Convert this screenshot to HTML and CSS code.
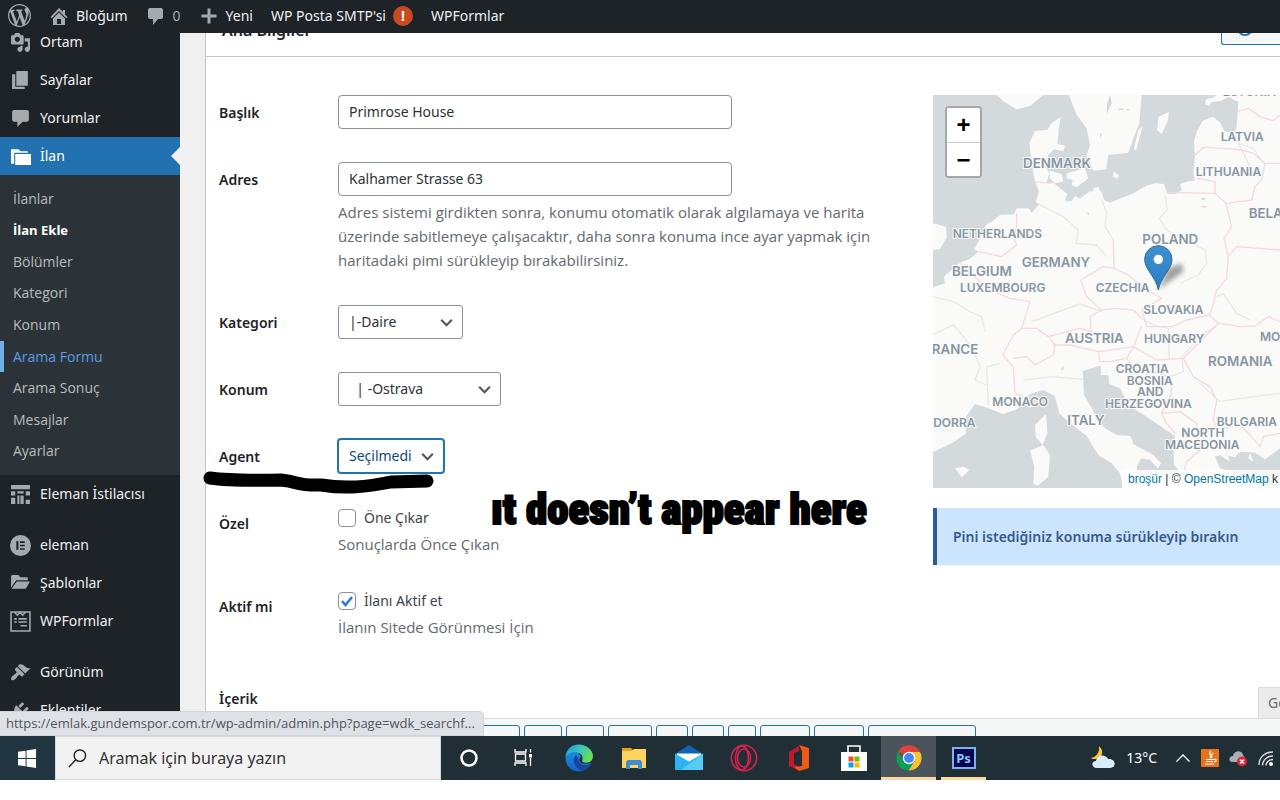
FILE: index.html
```html
<!DOCTYPE html>
<html lang="tr">
<head>
<meta charset="utf-8">
<title>İlan Ekle</title>
<link rel="stylesheet" href="styles.css">
</head>
<body>
<div class="screen">
  <header class="adminbar">
    <a class="bar-item bar-logo" href="#" aria-label="WordPress"><svg class="icon-lg" viewBox="0 0 20 20"><path d="M20 10c0-5.51-4.49-10-10-10C4.48 0 0 4.49 0 10c0 5.52 4.48 10 10 10 5.51 0 10-4.48 10-10zM7.78 15.37L4.37 6.22c.55-.02 1.17-.08 1.17-.08.5-.06.44-1.13-.06-1.11 0 0-1.45.11-2.37.11-.18 0-.37 0-.58-.01C4.12 2.69 6.87 1.11 10 1.11c2.33 0 4.45.87 6.05 2.34-.68-.11-1.65.39-1.65 1.58 0 .74.45 1.36.9 2.1.35.61.55 1.36.55 2.46 0 1.49-1.4 5-1.4 5l-3.03-8.37c.54-.02.82-.17.82-.17.5-.05.44-1.25-.06-1.22 0 0-1.44.12-2.38.12-.87 0-2.33-.12-2.33-.12-.5-.03-.56 1.2-.06 1.22l.92.08 1.26 3.41zM17.41 10c.24-.64.74-1.87.43-4.25.7 1.29 1.05 2.71 1.05 4.25 0 3.29-1.73 6.24-4.4 7.78.97-2.59 1.94-5.2 2.92-7.78zM6.1 18.09C3.12 16.65 1.11 13.53 1.11 10c0-1.3.23-2.48.72-3.59C3.25 10.3 4.67 14.2 6.1 18.09zm4.03-6.63l2.58 6.98c-.86.29-1.76.45-2.71.45-.79 0-1.57-.11-2.29-.33.81-2.38 1.62-4.74 2.42-7.1z"/></svg></a>
    <a class="bar-item" href="#"><svg viewBox="0 0 20 20"><path d="M16 8.500l2.500 2.500-1.300 1.300L10 5.100l-7.200 7.200L1.500 11 10 2l4 4V4h2v4.500zm-6-2l6 6V19H4v-6.500zM12 18v-5H8v5h4z"/></svg>Bloğum</a>
    <a class="bar-item bar-muted" href="#"><svg viewBox="0 0 20 20"><path d="M4 2h11c1.1 0 2 .9 2 2v7c0 1.1-.9 2-2 2h-3l-5 6v-6H4c-1.1 0-2-.9-2-2V4c0-1.1.9-2 2-2z"/></svg>0</a>
    <a class="bar-item" href="#"><svg viewBox="0 0 20 20"><path d="M17.500 8.500v3h-6v6h-3v-6h-6v-3h6v-6h3v6z"/></svg>Yeni</a>
    <a class="bar-item" href="#">WP Posta SMTP'si<span class="alert-dot">!</span></a>
    <a class="bar-item" href="#">WPFormlar</a>
  </header>

  <div class="page">
    <nav class="sidebar">
      <a class="menu-item" href="#"><svg viewBox="0 0 20 20"><path d="M13 11V4c0-.55-.45-1-1-1h-1.670L9 1H5L3.670 3H2c-.55 0-1 .45-1 1v7c0 .55.45 1 1 1h10c.55 0 1-.45 1-1zM7 4.500c1.380 0 2.500 1.120 2.500 2.500S8.380 9.500 7 9.500 4.500 8.380 4.500 7 5.620 4.500 7 4.500zM14 6h5v10.500c0 1.380-1.120 2.500-2.500 2.500S14 17.880 14 16.500s1.120-2.500 2.500-2.500c.17 0 .34.02.5.05V9h-3V6zm-4 8.050V13h2v3.500c0 1.380-1.120 2.500-2.500 2.500S7 17.880 7 16.500 8.120 14 9.500 14c.17 0 .34.02.5.05z"/></svg>Ortam</a>
      <a class="menu-item" href="#"><svg viewBox="0 0 20 20"><path d="M6 15V1h11v14H6zm-1 1h9v2H2V4h3v12z"/></svg>Sayfalar</a>
      <a class="menu-item" href="#"><svg viewBox="0 0 20 20"><path d="M4 2h12c1.100 0 2 .9 2 2v7c0 1.100-.9 2-2 2h-4l-5 5v-5H4c-1.100 0-2-.9-2-2V4c0-1.100.9-2 2-2z"/></svg>Yorumlar</a>
      <a class="menu-item menu-current" href="#"><svg viewBox="0 0 20 20"><path d="M1 3h7l2 2h7v1.500H4V17H1zM5 7.500h15V18H5z"/></svg>İlan</a>
      <div class="submenu">
        <a href="#">İlanlar</a>
        <a class="sub-current" href="#">İlan Ekle</a>
        <a href="#">Bölümler</a>
        <a href="#">Kategori</a>
        <a href="#">Konum</a>
        <a class="sub-hover" href="#">Arama Formu</a>
        <a href="#">Arama Sonuç</a>
        <a href="#">Mesajlar</a>
        <a href="#">Ayarlar</a>
      </div>
      <div class="menu-group">
        <a class="menu-item" href="#"><svg viewBox="0 0 20 20"><path d="M1 1h18v4H1zM1 7h4v4H1zM7 7h6v2H7zM15 7h4v4h-4zM1 13h4v6H1zM7 11h2v8H7zM10 11h3v8h-3zM15 15h4v4h-4z"/></svg>Eleman İstilacısı</a>
      </div>
      <div class="menu-group">
        <a class="menu-item" href="#"><svg viewBox="0 0 20 20"><path fill-rule="evenodd" d="M10 0a10 10 0 1 0 0 20 10 10 0 0 0 0-20zM6 6h2v8H6zM9.500 6H14v1.500H9.500zM9.500 9.300H14v1.500H9.500zM9.500 12.500H14V14H9.500z"/></svg>eleman</a>
        <a class="menu-item" href="#"><svg viewBox="0 0 20 20"><path d="M1 14V3l1-1h6l2 2h6l1 1v2H6z"/><path d="M6.500 8H19l-4 7H1.500z"/></svg>Şablonlar</a>
        <a class="menu-item" href="#"><svg viewBox="0 0 20 20"><path fill="none" stroke="#a7aaad" stroke-width="1.500" d="M1 1h18v18H1zM4 1l3 3 2.500-3L12 4l3-3M4 7.500h2.500M8 7.500h8M4 10.500h2.500M8 10.500h8M10 14h6"/></svg>WPFormlar</a>
      </div>
      <div class="menu-group">
        <a class="menu-item" href="#"><svg viewBox="0 0 20 20"><path d="M14.480 11.060L7.410 3.990l1.500-1.500c.5-.56 2.300-.47 3.510.32 1.210.8 1.430 1.280 2.910 2.100 1.180.64 2.450 1.260 4.450.85zm-.71.71L6.700 4.700 4.930 6.470c-.39.39-.39 1.020 0 1.410l1.060 1.060c.39.39.39 1.030 0 1.420-.6.6-1.430 1.110-2.210 1.690-.35.26-.7.53-1.010.84C1.430 14.230.4 16.080 1.400 17.070c.99 1 2.840-.03 4.180-1.360.31-.31.58-.66.85-1.020.57-.78 1.080-1.610 1.690-2.210.39-.39 1.020-.39 1.410 0l1.060 1.060c.39.39 1.020.39 1.410 0z"/></svg>Görünüm</a>
        <a class="menu-item" href="#"><svg viewBox="0 0 20 20"><path d="M13.110 4.360L9.870 7.600 8 5.730l3.240-3.240c.35-.34 1.050-.2 1.560.32.52.51.66 1.210.31 1.550zm-8 1.770l.91-1.120 9.010 9.010-1.190.84c-.71.71-2.630 1.160-3.820 1.160H6.140L4.900 17.260c-.59.59-1.540.59-2.120 0-.59-.58-.59-1.530 0-2.120l1.240-1.240v-3.880c0-1.130.4-3.190 1.090-3.890zm7.260 3.970l3.240-3.240c.34-.35 1.040-.21 1.550.31.52.51.66 1.210.31 1.550l-3.240 3.250z"/></svg>Eklentiler</a>
      </div>
    </nav>

    <main class="panel">
      <div class="panel-head">
        <h2>Ana Bilgiler</h2>
        <button class="list-btn" type="button"><svg viewBox="0 0 16 16"><circle cx="8" cy="8" r="7"/></svg>Liste</button>
      </div>
      <div class="panel-body">
        <form class="fields">
          <div class="row"><label class="name" for="title">Başlık</label><div><input class="text" id="title" type="text" value="Primrose House"></div></div>
          <div class="row"><label class="name" for="address">Adres</label><div><input class="text" id="address" type="text" value="Kalhamer Strasse 63">
            <p class="hint hint-long">Adres sistemi girdikten sonra, konumu otomatik olarak algılamaya ve harita üzerinde sabitlemeye çalışacaktır, daha sonra konuma ince ayar yapmak için haritadaki pimi sürükleyip bırakabilirsiniz.</p></div></div>
          <div class="row"><label class="name" for="category">Kategori</label><div><select class="pick pick-category" id="category"><option>|-Daire</option></select></div></div>
          <div class="row"><label class="name" for="place">Konum</label><div><select class="pick pick-place" id="place"><option>&nbsp;&nbsp;| -Ostrava</option></select></div></div>
          <div class="row"><label class="name" for="agent">Agent</label><div><select class="pick pick-agent" id="agent"><option>Seçilmedi</option></select></div></div>
          <div class="row"><span class="name">Özel</span><div><label class="check"><input type="checkbox">Öne Çıkar</label><p class="hint">Sonuçlarda Önce Çıkan</p></div></div>
          <div class="row"><span class="name">Aktif mi</span><div><label class="check"><input type="checkbox" checked>İlanı Aktif et</label><p class="hint">İlanın Sitede Görünmesi İçin</p></div></div>
        </form>
        <aside class="side">
          <div class="map">
            <svg class="map-art" viewBox="39 285 1041 1179" preserveAspectRatio="xMinYMin slice">
              <defs><linearGradient id="pin" x1="0" y1="0" x2="0" y2="1"><stop offset="0" stop-color="#3f92cf"/><stop offset="1" stop-color="#2a7bc4"/></linearGradient>
              <filter id="soft"><feGaussianBlur stdDeviation="8"/></filter></defs>
              <path class="sea" d="M39 285H890L880 293 858 298 855 313 868 318 873 307 905 302 925 290 938 298 955 305 950 380 946 394 930 398 912 392 900 367 878 350 848 362 830 395 822 425 825 470 820 520 825 542 808 543 780 552 785 570 768 582 742 582 732 552 705 550 680 557 640 580 570 608 552 600 545 575 510 574 480 596 465 588 455 603 434 604 442 582 420 565 400 548 380 548 388 520 375 500 385 465 402 448 430 454 435 437 412 432 416 390 422 350 395 370 382 390 345 392 328 430 335 490 344 540 357 575 347 605 358 613 335 638 325 625 290 625 282 643 240 645 215 665 200 672 185 705 163 748 175 755 148 778 118 788 72 830 75 850 39 862Z"/>
              <path class="sea" d="M39 1357L100 1327 138 1300 135 1255 165 1212 205 1225 250 1242 292 1228 330 1182 370 1170 404 1188 418 1240 445 1265 500 1308 535 1365 575 1390 600 1420 610 1464H39ZM488 1113L520 1103 542 1097 543 1125 565 1125 568 1152 600 1165 625 1215 680 1250 765 1308 760 1345 762 1395 790 1425H655L650 1400 664 1375 690 1380 714 1405 723 1390 700 1365 640 1332 632 1308 590 1305 555 1285 530 1260 515 1223 492 1185ZM885 1370L900 1365 930 1385 915 1365 945 1372 960 1355 1005 1358 1035 1378 1080 1345V1464H950L935 1415 900 1405Z"/>
              <path class="land" d="M230 285L252 305 290 328 330 318 370 285ZM447 285L470 345 500 385 510 435 500 465 520 512 558 508 565 465 625 458 642 410 658 370 665 285ZM716 350L748 335 742 365 725 402 711 390ZM668 378L648 452 642 445 655 390ZM580 515L597 525 592 536 580 530ZM520 565L535 560 545 585 525 590ZM388 512L425 522 430 545 405 550 390 535ZM440 520L495 505 505 535 470 562 455 555 458 540 440 535ZM39 670L78 680 80 712 60 747 39 750ZM378 1243L382 1300 368 1335 347 1310 345 1275ZM370 1335L390 1365 385 1430 352 1458 340 1450 343 1400 330 1352ZM105 1405L130 1400 148 1410 125 1432ZM990 1360L1000 1385 985 1375ZM920 1360L930 1382 915 1375Z"/>
              <path class="lake" d="M570 285L575 310 560 342 562 310ZM540 400H545L542 418ZM595 326H610V330H595ZM620 328H630V331H620ZM845 594H855V599H845ZM840 620L858 617V623ZM500 638H507V645ZM432 1095L430 1110 422 1110Z"/>
              <path class="river" d="M735 585L742 630 718 655 740 690 855 750 860 790 835 825 780 850M358 613L430 650 475 690 468 730 530 735 560 770M545 600L560 640 555 680 580 720M335 965L430 930 480 912 545 935M665 955L700 975 745 985 748 1080M39 890L100 905 150 935 185 950 195 995M39 1005L100 975 130 1010 160 1050 180 1100 165 1140 200 1155M205 1215L200 1100 240 1090M310 1140L400 1130 490 1138M750 1130L790 1115 785 1070 850 1000 890 980M840 1150L900 1205 960 1195 1080 1180M890 890L910 880 950 940 990 960M955 430L1000 445 1030 490M955 430L990 500"/>
              <path class="border" d="M825 465L850 442 905 445 965 450 1000 460 1035 490 1025 540 1005 560 995 600 918 610 885 580 740 577M885 580L885 545 830 535M950 335L985 325 1020 350 1060 362 1080 345M1035 490H1080M918 610L935 680 912 715 925 770 950 740 1080 750M925 770L920 835 888 875 880 915 868 945 895 970 960 980 1005 978 1045 950 1080 965M580 720L582 805 550 800 482 840 500 890 545 930 590 925 640 930 665 955M582 805L625 825 680 870 725 895M725 895L665 930 680 980 755 980 800 960 868 945M545 930L510 950 515 995 480 985 385 1010 350 985 305 985 280 1005 248 1065 280 1100 285 1180 310 1190M305 985L330 905M330 905L270 895 200 865 175 840 115 785M175 755L245 770 290 735 280 710 290 680 290 640M280 1075L320 1070 345 1095 400 1065 405 1035 385 1010M400 1035L450 1035 535 1055 640 1040 665 980M535 1055L540 1085 570 1085 620 1075 640 1040 710 1080 790 1075 835 1030 895 970M790 1075L820 1130 870 1160 890 1200 880 1260 890 1290M620 1075L645 1115 700 1115 750 1130 755 1180 725 1240 740 1270 765 1300M725 1240L780 1235 830 1270 840 1350 800 1385 790 1420M870 1290L960 1275 985 1300 1020 1340 1030 1310 1080 1300M345 545L395 550"/>
              <g class="places">
                <text x="908" y="288">ESTONIA</text><text x="902" y="423">LATVIA</text><text x="827" y="527">LITHUANIA</text>
                <text class="big" x="309" y="503">DENMARK</text><text class="big" x="986" y="655">BELARUS</text>
                <text x="98" y="713">NETHERLANDS</text><text class="big" x="667" y="731">POLAND</text>
                <text class="big" x="305" y="802">GERMANY</text><text class="big" x="96" y="829">BELGIUM</text><text x="120" y="877">LUXEMBOURG</text>
                <text x="527" y="877">CZECHIA</text><text x="670" y="941">SLOVAKIA</text><text class="big" x="435" y="1030">AUSTRIA</text><text x="672" y="1030">HUNGARY</text>
                <text x="1020" y="1024">MOLDOVA</text><text class="big" x="12" y="1063">FRANCE</text><text class="big" x="864" y="1098">ROMANIA</text>
                <text x="587" y="1120">CROATIA</text><text x="620" y="1154">BOSNIA</text><text x="651" y="1188">AND</text><text x="555" y="1223">HERZEGOVINA</text>
                <text x="217" y="1218">MONACO</text><text class="big" x="442" y="1276">ITALY</text><text x="-14" y="1281">ANDORRA</text>
                <text x="890" y="1279">BULGARIA</text><text x="784" y="1312">NORTH</text><text x="735" y="1346">MACEDONIA</text>
              </g>
              <path filter="url(#soft)" fill="#444" opacity=".5" d="M715 868L745 805 785 790 790 815Z"/>
              <path fill="url(#pin)" stroke="#2e6c97" stroke-width="3" d="M715 870C708 830 674 810 674 778A41 41 0 0 1 756 778C756 810 722 830 715 870Z"/>
              <circle cx="715" cy="778" r="14" fill="#fff"/>
            </svg>
            <div class="zoomer"><button type="button">+</button><button type="button">−</button></div>
            <div class="credit"><a href="#">broşür</a> | © <a href="#">OpenStreetMap</a> k</div>
          </div>
          <div class="notice">Pini istediğiniz konuma sürükleyip bırakın</div>
        </aside>
      </div>
      <section class="editor">
        <div class="editor-head"><span class="name">İçerik</span><button class="tab" type="button">Görsel</button></div>
        <div class="quicktags">
          <button class="q-first" type="button" aria-label="b"></button><button class="q-m" type="button" aria-label="i"></button><button class="q-m" type="button" aria-label="link"></button><button class="q-l" type="button" aria-label="b-quote"></button><button class="q-s" type="button" aria-label="del"></button><button class="q-s" type="button" aria-label="ins"></button><button class="q-xs" type="button" aria-label="img"></button><button class="q-xl" type="button" aria-label="code"></button><button class="q-xl" type="button" aria-label="more"></button><button class="q-xxl" type="button" aria-label="close"></button>
        </div>
      </section>
    </main>
    <div class="status">https://emlak.gundemspor.com.tr/wp-admin/admin.php?page=wdk_searchf...</div>
  </div>

  <footer class="taskbar">
    <button class="start" type="button" aria-label="Başlat"><svg viewBox="0 0 20 20"><path fill="#fff" d="M0 3l8-1.200v7.700H0zM9 1.600L19 0v9.500H9zM0 10.500h8v7.700L0 17zM9 10.500h10V20L9 18.400z"/></svg></button>
    <label class="search"><svg viewBox="0 0 20 20"><g fill="none" stroke="#222" stroke-width="1.500"><circle cx="12.500" cy="7" r="6"/><path d="M8 11.500L1 19"/></g></svg><input type="text" aria-label="Arama" value="Aramak için buraya yazın"></label>
    <button class="task" type="button" aria-label="Cortana"><svg viewBox="0 0 28 28"><circle cx="14" cy="14" r="7.500" fill="none" stroke="#fff" stroke-width="2.500"/></svg></button>
    <button class="task" type="button" aria-label="Görev görünümü"><svg viewBox="0 0 28 28"><path fill="none" stroke="#fff" stroke-width="1.300" d="M5 5v3h11V5M5 22v-3h11v3M5.500 10h10v7h-10zM20.500 5v3.500M20.500 14v8"/><path fill="#fff" d="M19 10h3v3.500h-3z"/></svg></button>
    <button class="task" type="button" aria-label="Edge"><svg viewBox="0 0 28 28"><defs><linearGradient id="eg" x1="0" y1="0" x2="1" y2=".4"><stop offset="0" stop-color="#1b9be0"/><stop offset=".5" stop-color="#35c1c4"/><stop offset="1" stop-color="#66de56"/></linearGradient><linearGradient id="eb" x1="0" y1="0" x2="0" y2="1"><stop offset="0" stop-color="#1b8fe0"/><stop offset="1" stop-color="#1466c4"/></linearGradient></defs><path fill="url(#eb)" d="M.5 14C.5 7 8 5 13 8l3 5c-3 2-3 9 10 6-2 5-7 8.500-12 8.500C6 27.500.5 21 .5 14z"/><path fill="#17479c" d="M11 11c-5 5-1 14 6 15.500 4-.5 7-3 9-7-7 4-13 0-12.500-5z"/><path fill="url(#eg)" d="M.5 13C1 5 7 .5 14 .5S28 6 28 12c0 5-4 7.500-8.500 6.500-4-.5-1.500-3-2-5.500-2-6-12-7-17 0z"/></svg></button>
    <button class="task" type="button" aria-label="Dosya Gezgini"><svg viewBox="0 0 28 28"><path fill="#e8a317" d="M2 4h9l2 2v4H2z"/><path fill="#ffd45e" d="M2 7h10l2-2h12v19H2z"/><path fill="#3b8fd6" d="M6 25v-7l1.500-2h13l1.500 2v7h-4v-4h-8v4z"/></svg></button>
    <button class="task" type="button" aria-label="Posta"><svg viewBox="0 0 28 28"><path fill="#0f62b8" d="M0 10L14 1l14 9v4H0z"/><path fill="#fff" d="M2 9.500h24v5l-12 8-12-8z"/><path fill="#2fb3f0" d="M0 9.500l14 8 14-8V26H0z"/><path fill="#53cdf7" d="M28 9.500V26H6z"/></svg></button>
    <button class="task" type="button" aria-label="Opera"><svg viewBox="0 0 28 28"><g fill="none" stroke="#dc2150" stroke-width="1.600"><circle cx="14" cy="14" r="12.700"/><ellipse cx="12" cy="14" rx="6.500" ry="12"/><ellipse cx="14" cy="14" rx="6.500" ry="9"/></g></svg></button>
    <button class="task" type="button" aria-label="Office"><svg viewBox="0 0 28 28"><path fill="#c3182a" d="M4 8l10-6v5L9 9v11l7 4-3 2-9-4z"/><path fill="#ef5a19" d="M14 1l10 3v20l-10 3-5-4 8-1V7z"/></svg></button>
    <button class="task" type="button" aria-label="Mağaza"><svg viewBox="0 0 28 28"><path fill="none" stroke="#fff" stroke-width="1.600" d="M8 8V2h12v6"/><path fill="#fff" d="M1 8h26v19H1z"/><path fill="#f25022" d="M8.500 12.500h5v5h-5z"/><path fill="#7fba00" d="M14.500 12.500h5v5h-5z"/><path fill="#00a4ef" d="M8.500 18.500h5v5h-5z"/><path fill="#ffb900" d="M14.500 18.500h5v5h-5z"/></svg></button>
    <button class="task task-active" type="button" aria-label="Chrome"><svg viewBox="0 0 28 28"><path fill="#db4437" d="M14 14L3.200 7.500A12.500 12.500 0 0 1 25 8H14z"/><path fill="#f4c430" d="M14 8h11a12.500 12.500 0 0 1-11.500 18.500L19.500 17z"/><path fill="#0f9d58" d="M3.200 7.500A12.500 12.500 0 0 0 13.500 26.500L19 17.500 9 17z"/><circle cx="14" cy="14" r="6.200" fill="#fff"/><circle cx="14" cy="14" r="4.900" fill="#4285f4"/></svg></button>
    <button class="task task-open" type="button" aria-label="Photoshop"><span class="ps">Ps</span></button>
    <div class="tray">
      <svg class="icon-weather" viewBox="0 0 26 24"><path fill="#fbc630" d="M9 0c5 4 4 12-3 13-2 .3-4 0-5-1 5-1 9-5 8-12z"/><path fill="#d9ecfa" d="M7 22c-6 0-6-7-1-7 1-7 10-7 12-2 8-1 9 9 2 9z"/></svg>
      <span>13°C</span>
      <svg class="icon-chev" viewBox="0 0 16 16"><path fill="none" stroke="#fff" stroke-width="1.400" d="M1.500 11.500L8 5l6.500 6.500"/></svg>
      <svg viewBox="0 0 18 18"><rect width="18" height="18" rx="1" fill="#e8731a"/><path fill="none" stroke="#fff" stroke-width="1.200" d="M10 2c-4 3 2 4-1 7M12 4c-2 2-2 3-1 5M5 10.500h8c3-1 3 2 0 2.500M5 12.500h7M4 15h9"/></svg>
      <svg viewBox="0 0 18 18"><path fill="#a9afb3" d="M3 13C-1 12 0 7 4 7c1-6 9-6 10-1l2 3-6 4z"/><circle cx="13" cy="12.500" r="5" fill="#e02438"/><path stroke="#fff" stroke-width="1.500" d="M11 10.500l4 4m0-4l-4 4"/></svg>
      <svg viewBox="0 0 18 18"><g fill="none" stroke="#d7dbde" stroke-width="1.400"><path d="M2 16C2 8 8 3 16 3M5.500 16.500C5.500 11 10 7 16 7M9 16.500c0-3 3-6 7-6"/></g><circle cx="14" cy="15" r="2" fill="#fff"/></svg>
    </div>
  </footer>

  <svg class="stroke" viewBox="0 0 240 30"><path d="M9 12Q30 15 80 14C100 16 95 20 120 19C145 23 165 21 190 16L226 15"/></svg>
  <p class="remark">ıt doesn’t appear here</p>
</div>
</body>
</html>
```
FILE: styles.css
```css
* { box-sizing: border-box; }
body { margin: 0; background: #fff; color: #3c434a; font: 14px/24px "Noto Sans", "Open Sans", sans-serif; }
button, input, select { font: inherit; color: inherit; margin: 0; }
a { color: inherit; text-decoration: none; }
p, h2 { margin: 0; }
svg { display: block; flex: none; }

.screen { position: relative; display: flex; flex-direction: column; height: 100vh; padding-bottom: 20px; overflow: hidden; }

.adminbar { position: relative; z-index: 1; display: flex; align-items: center; flex: none; height: 33px; padding: 0 8px 2px; gap: 18px; background: #1d2327; color: #f0f0f1; }
.bar-item { display: flex; align-items: center; gap: 7px; white-space: nowrap; }
.bar-item svg { width: 20px; height: 20px; fill: #a7aaad; }
.bar-item .icon-lg { width: 23px; height: 23px; }
.bar-muted { color: #a7aaad; }
.alert-dot { width: 20px; height: 20px; border-radius: 10px; background: #ca4a1f; color: #fff; font-weight: 700; line-height: 20px; text-align: center; }

.page { position: relative; flex: 1; min-height: 0; display: flex; overflow: hidden; background: #f0f0f1; }

/* The menu is scrolled a little under the top bar. */
.sidebar { flex: none; width: 180px; margin-top: -10px; background: #1d2327; color: #f0f0f1; }
.menu-item { display: flex; align-items: center; gap: 9px; height: 38px; padding-left: 10px; white-space: nowrap; }
.menu-item svg { width: 21px; height: 21px; fill: #a7aaad; }
.menu-current { position: relative; background: #2271b1; color: #fff; }
.menu-current svg { fill: #fff; }
.menu-current::after { content: ""; position: absolute; right: 0; top: 10px; border: 9px solid transparent; border-left-width: 0; border-right-color: #f0f0f1; }
.submenu { display: grid; grid-auto-rows: 1fr; height: 300px; padding: 8px 0; background: #2c3338; color: #b8bbbe; font-family: "Open Sans", sans-serif; }
.submenu a { display: flex; align-items: center; padding-left: 13px; }
.submenu .sub-current { color: #fff; font-size: 13px; font-weight: 700; }
.submenu .sub-hover { padding-left: 9px; border-left: 4px solid #72aee6; color: #5a9ee6; }
.menu-group { margin-bottom: 13px; }

.panel { flex: 1; min-width: 0; margin-left: 25px; border-left: 1px solid #c3c4c7; background: #fff; }
.panel-head { display: flex; align-items: flex-end; justify-content: space-between; height: 24px; padding-left: 16px; border-bottom: 1px solid #c3c4c7; overflow: hidden; }
.panel-head h2 { padding-bottom: 14px; color: #1d2327; font-size: 16px; font-weight: 600; line-height: 24px; }
.list-btn { display: flex; align-items: center; gap: 8px; flex: none; width: 59px; height: 34px; margin-bottom: 11px; padding: 0 0 0 15px; overflow: hidden; border: 1px solid #2271b1; border-right: 0; border-radius: 3px 0 0 3px; background: #f6f7f7; color: #2271b1; white-space: nowrap; }
.list-btn svg { width: 16px; height: 16px; fill: none; stroke: #2271b1; stroke-width: 2; }
.panel-body { display: grid; grid-template-columns: 2fr 1fr; gap: 20px; padding: 38px 0 0 13px; }

.fields { display: flex; flex-direction: column; gap: 33px; }
.row { display: grid; grid-template-columns: 119px minmax(0, 1fr); }
.name { padding-top: 6px; color: #1d2327; font-size: 14px; font-weight: 600; }
.text { display: block; width: 394px; max-width: 100%; height: 34px; padding: 0 10px 2px; border: 1px solid #8c8f94; border-radius: 4px; background: #fff; color: #2c3338; }
.hint { margin-top: 2px; color: #646970; font-family: "Open Sans", sans-serif; font-size: 15px; }
.hint-long { max-width: 546px; margin-top: 4px; }
.pick { display: block; height: 34px; padding: 0 24px 1px 10px; border: 1px solid #8c8f94; border-radius: 3px; color: #2c3338; appearance: none; background: #fff url("data:image/svg+xml,%3Csvg xmlns='http://www.w3.org/2000/svg' viewBox='0 0 16 16'%3E%3Cpath d='M3 5.500l5 5 5-5' fill='none' stroke='%2350575e' stroke-width='2'/%3E%3C/svg%3E") no-repeat right 7px center / 17px 17px; }
.pick-category { width: 125px; }
.pick-place { width: 163px; }
.pick-agent { width: 106px; border-color: #2271b1; box-shadow: 0 0 0 1px #2271b1; color: #0a4b78; }
.check { display: flex; align-items: center; gap: 8px; }
.check input { appearance: none; width: 18px; height: 18px; border: 1px solid #8c8f94; border-radius: 4px; background: #fff; }
.check input:checked { background: url("data:image/svg+xml,%3Csvg xmlns='http://www.w3.org/2000/svg' viewBox='0 0 16 16'%3E%3Cpath d='M3 8l3.500 4L13 4' fill='none' stroke='%232f7bc8' stroke-width='2.500'/%3E%3C/svg%3E") center / 16px 16px; }

.side { display: flex; flex-direction: column; gap: 20px; min-width: 0; }
.map { position: relative; height: 393px; overflow: hidden; background: #fafaf8; }
.map-art { width: 100%; height: 100%; }
.sea { fill: #d4dadc; }
.land { fill: #fafaf8; }
.lake { fill: #d0d6d9; }
.river { fill: none; stroke: #e6e9ea; stroke-width: 4; stroke-linejoin: round; }
.border { fill: none; stroke: #f3dade; stroke-width: 4; stroke-linejoin: round; }
.places { fill: #8796a3; stroke: #fafaf8; stroke-width: 6; paint-order: stroke; font-family: Inter, sans-serif; font-size: 36px; font-weight: 600; }
.places .big { font-size: 40px; }
.zoomer { position: absolute; left: 12px; top: 11px; width: 37px; border: 2px solid #a4a8aa; border-radius: 4px; background: #fff; overflow: hidden; }
.zoomer button { display: block; width: 100%; height: 34px; padding: 0; border: 0; background: #fff; color: #000; font: 700 24px/32px "Liberation Sans", sans-serif; }
.zoomer button + button { border-top: 1px solid #ccc; }
.credit { position: absolute; right: 0; bottom: 0; width: 158px; height: 18px; padding-left: 6px; overflow: hidden; background: #fffc; color: #333; font: 12px/18px "Liberation Sans", Arial, sans-serif; white-space: nowrap; }
.credit a { color: #0078a8; }
.notice { padding: 17px 16px 16px; border-left: 4px solid #2f5b93; background: #cce5ff; color: #38598b; font-weight: 600; white-space: nowrap; overflow: hidden; }

.editor { padding: 48px 0 0 13px; }
.editor-head { display: flex; justify-content: space-between; align-items: flex-start; height: 31px; }
.editor-head .name { padding-top: 0; }
.tab { width: 22px; height: 31px; padding: 0 0 0 9px; overflow: hidden; border: 1px solid #dcdcde; border-width: 1px 0 0 1px; background: #ebebeb; color: #646970; text-align: left; }
.quicktags { display: flex; gap: 4px; padding: 6px 0; border-top: 1px solid #dcdcde; background: #f6f7f7; }
.quicktags button { flex: none; height: 30px; padding: 0; border: 1px solid #2271b1; border-radius: 3px; background: #f6f7f7; }
.quicktags .q-first { width: 301px; }
.quicktags .q-xs { width: 28px; }
.quicktags .q-s { width: 32px; }
.quicktags .q-m { width: 38px; }
.quicktags .q-l { width: 44px; }
.quicktags .q-xl { width: 50px; }
.quicktags .q-xxl { width: 108px; }

.status { position: absolute; left: 0; bottom: 0; height: 25px; padding: 0 8px 0 6px; border: 1px solid #d0d4da; border-left: 0; border-radius: 0 5px 0 0; background: #dee1e6; color: #50545a; font-family: "Open Sans", sans-serif; font-size: 13px; line-height: 23px; white-space: nowrap; }

.taskbar { display: flex; flex: none; height: 44px; background: #202e36; color: #fff; }
.taskbar button { display: flex; align-items: center; justify-content: center; flex: none; width: 55px; padding: 0; border: 0; background: none; }
.taskbar .start { background: #213640; }
.start svg { width: 19px; height: 19px; }
.search { display: flex; align-items: center; gap: 12px; flex: none; width: 386px; padding-left: 12px; border: 1px solid #d8d8d8; background: #f2f2f2; }
.search svg { width: 19px; height: 19px; }
.search input { flex: 1; min-width: 0; padding: 0; border: 0; background: none; color: #333; font-size: 16px; }
.task svg { width: 28px; height: 28px; }
.taskbar .task-active { background: #4b545b; box-shadow: inset 0 -3px #fbd9a4; }
.taskbar .task-open { background: linear-gradient(#fbd9a4, #fbd9a4) no-repeat center bottom / 45px 3px; }
.ps { width: 24px; height: 22px; border: 2px solid #7ab4ea; background: #06064f; color: #8cc3f5; font-size: 13px; font-weight: 700; line-height: 18px; }
.tray { display: flex; align-items: center; gap: 10px; margin-left: auto; padding-right: 5px; }
.tray svg { width: 18px; height: 18px; }
.tray .icon-weather { width: 26px; height: 24px; }
.tray .icon-chev { width: 16px; height: 16px; margin-left: 8px; }

/* Hand-drawn notes lying over the page. */
.stroke { position: absolute; left: 201px; top: 466px; width: 240px; height: 30px; pointer-events: none; }
.stroke path { fill: none; stroke: #000; stroke-width: 13; stroke-linecap: round; stroke-linejoin: round; }
.remark { position: absolute; left: 491px; top: 485px; color: #000; font: 900 43px/48px Impact, "Roboto Condensed", Roboto, sans-serif; -webkit-text-stroke: 2px #000; white-space: nowrap; }
```
